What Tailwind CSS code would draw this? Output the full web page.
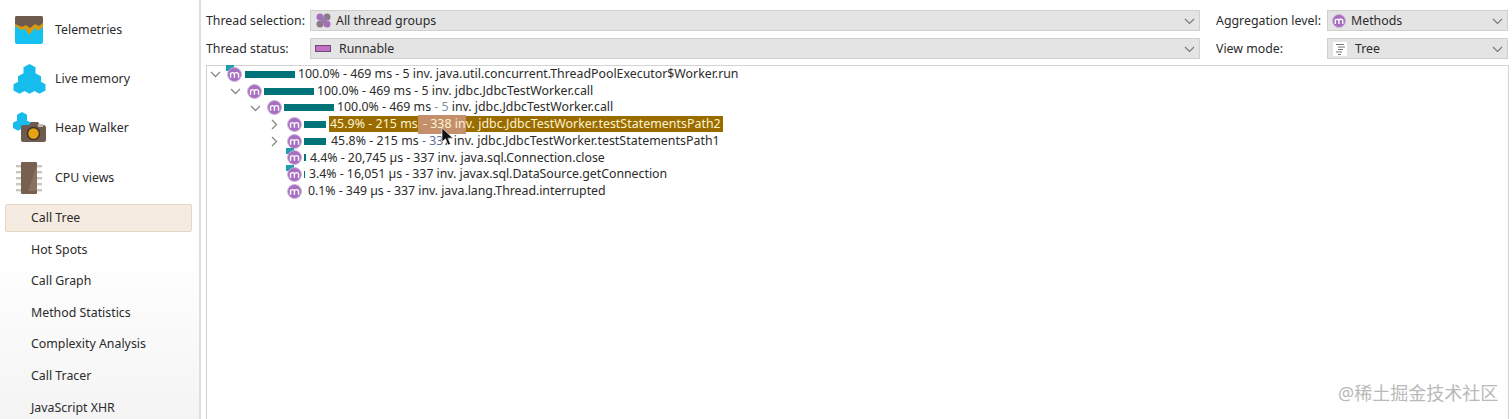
<!DOCTYPE html>
<html lang="en">
<head>
  <meta charset="UTF-8" />
  <title>Call Tree</title>
  <script src="https://cdn.jsdelivr.net/npm/@tailwindcss/browser@4"></script>
</head>
<body class="relative flex h-[419px] w-[1512px] overflow-hidden bg-white font-['Noto_Sans','Noto_Sans_CJK_SC',sans-serif] text-[12.35px] text-[#2b2b2b]">

  <svg class="hidden">
    <symbol id="method" viewBox="0 0 16 16">
      <circle cx="8" cy="8" r="7.4" fill="#a86fc0" stroke="#cdb0dc" stroke-width="1"/>
      <path d="M3.800 11.500V6M3.800 7.200c.6-1.400 3.400-1.700 4.100 0V11.500M7.900 7.200c.7-1.700 3.900-1.600 4.400.2v4.100" fill="none" stroke="#fff" stroke-width="1.500"/>
    </symbol>
  </svg>

  <!-- Sidebar -->
  <aside class="flex h-full w-[201px] shrink-0 flex-col border-r-2 border-[#dedede] bg-gradient-to-b from-white from-60% to-[#f4f4f4] px-[5px]">
    <div class="flex h-[49px] shrink-0 items-center pl-[9px] pt-[11px]">
      <div class="w-[41px] shrink-0">
        <svg class="h-[30px] w-[30px]" viewBox="0 0 30 30">
          <rect x="1" y="1" width="28" height="28" rx="2" fill="#14c1f0"/>
          <path d="M1 3a2 2 0 0 1 2-2h24a2 2 0 0 1 2 2v9l-5 4-3-3-6 7-4-6-4 1-6-4z" fill="#d49a14"/>
          <path d="M1 3a2 2 0 0 1 2-2h24a2 2 0 0 1 2 2v5l-4 3-4-2-5 4-4-3-4 2-7-3z" fill="#6f5a4e"/>
        </svg>
      </div>
      <span>Telemetries</span>
    </div>
    <div class="flex h-[49px] shrink-0 items-center pl-[8px] pt-[11px]">
      <div class="w-[42px] shrink-0">
        <svg class="h-[32px] w-[33px]" viewBox="0 0 33 32" fill="#16bdec">
          <path d="M16.500 1l6 3.200v6.400l-6 3.200-6-3.200V4.200z"/>
          <path d="M11 10l6 3.200v6.400l-6 3.200-6-3.200v-6.400z"/>
          <path d="M22 10l6 3.200v6.400l-6 3.200-6-3.200v-6.400z"/>
          <path d="M6.500 18l6 3.200v6.400l-6 3.200-6-3.200v-6.400z"/>
          <path d="M16.500 18l6 3.200v6.400l-6 3.200-6-3.200v-6.400z"/>
          <path d="M26.500 18l6 3.200v6.400l-6 3.200-6-3.200v-6.400z"/>
        </svg>
      </div>
      <span>Live memory</span>
    </div>
    <div class="flex h-[49px] shrink-0 items-center pl-[8px] pt-[11px]">
      <div class="w-[42px] shrink-0">
        <svg class="h-[32px] w-[33px]" viewBox="0 0 33 32">
          <g fill="#16bdec">
            <path d="M9 0l5 2.700v5.400l-5 2.700-5-2.700V2.700z"/>
            <path d="M5 8l5 2.700v5.400l-5 2.700-5-2.700v-5.400z"/>
            <path d="M13 8l5 2.700v5.400l-5 2.700-5-2.700v-5.400z"/>
          </g>
          <path d="M8 15a2 2 0 0 1 2-2h6l2-3h7l2 3h3a3 3 0 0 1 3 3v12a2 2 0 0 1-2 2H10a2 2 0 0 1-2-2z" fill="#6f5a4e"/>
          <rect x="25" y="12" width="5" height="3" fill="#c9b9ae"/>
          <circle cx="20.500" cy="21.500" r="6.800" fill="#3f342d"/>
          <circle cx="20.500" cy="21.500" r="5.200" fill="#e5a411"/>
        </svg>
      </div>
      <span>Heap Walker</span>
    </div>
    <div class="flex h-[50px] shrink-0 items-center pl-[11px] pt-[12px]">
      <div class="w-[39px] shrink-0">
        <svg class="h-[32px] w-[27px]" viewBox="0 0 27 32">
          <g fill="#c9c5bf">
            <rect x="0" y="3" width="5" height="2.400"/><rect x="0" y="9" width="5" height="2.400"/><rect x="0" y="15" width="5" height="2.400"/><rect x="0" y="21" width="5" height="2.400"/><rect x="0" y="27" width="5" height="2.400"/>
            <rect x="21" y="3" width="5" height="2.400"/><rect x="21" y="9" width="5" height="2.400"/><rect x="21" y="15" width="5" height="2.400"/><rect x="21" y="21" width="5" height="2.400"/><rect x="21" y="27" width="5" height="2.400"/>
          </g>
          <rect x="5" y="0" width="16" height="32" rx="1" fill="#77604f"/>
          <path d="M21 3v26H12z" fill="#8a7261"/>
        </svg>
      </div>
      <span>CPU views</span>
    </div>

    <div class="mt-[7px] flex h-[28px] w-[187px] shrink-0 items-center rounded-[2px] border border-[#e6d6c4] bg-[#f6ebe0] pl-[25px]">Call Tree</div>
    <div class="flex h-[31.600px] shrink-0 items-center pl-[26px] pt-[4px]">Hot Spots</div>
    <div class="flex h-[31.600px] shrink-0 items-center pl-[26px] pt-[4px]">Call Graph</div>
    <div class="flex h-[31.600px] shrink-0 items-center pl-[26px] pt-[4px]">Method Statistics</div>
    <div class="flex h-[31.600px] shrink-0 items-center pl-[26px] pt-[4px]">Complexity Analysis</div>
    <div class="flex h-[31.600px] shrink-0 items-center pl-[26px] pt-[4px]">Call Tracer</div>
    <div class="flex h-[31.600px] shrink-0 items-center pl-[26px] pt-[4px]">JavaScript XHR</div>
  </aside>

  <!-- Main -->
  <main class="flex min-w-0 flex-1 flex-col pl-[5px] pr-[3px]">
    <div class="flex h-[65px] shrink-0 flex-col gap-[7px] pt-[10px]">
      <div class="flex h-[21px] items-center whitespace-nowrap">
        <span class="w-[104px] shrink-0 pt-[1px]">Thread selection:</span>
        <div class="flex h-[21px] w-[890px] items-center border border-[#cfcfcf] bg-[#e4e4e4] pl-[5px] pr-[4px]">
          <svg class="mr-[5px] h-[15px] w-[15px] shrink-0" viewBox="0 0 15 15">
            <circle cx="4" cy="4" r="3.500" fill="#a56fc0"/><circle cx="11" cy="4" r="3.500" fill="#8a7a8c"/>
            <circle cx="4" cy="11" r="3.500" fill="#8a7a8c"/><circle cx="11" cy="11" r="3.500" fill="#a56fc0"/>
            <circle cx="7.500" cy="7.500" r="3" fill="#9a78aa"/>
          </svg>
          <span class="pt-[1px]">All thread groups</span>
          <svg class="ml-auto h-[8px] w-[11px]" viewBox="0 0 11 8"><path d="M1 2l4.500 4.500L10 2" fill="none" stroke="#777" stroke-width="1.100"/></svg>
        </div>
        <span class="ml-[16px] w-[111px] shrink-0 pt-[1px]">Aggregation level:</span>
        <div class="flex h-[21px] w-[181px] items-center border border-[#cfcfcf] bg-[#e4e4e4] pl-[4px] pr-[4px]">
          <svg class="mr-[5px] h-[14px] w-[14px] shrink-0"><use href="#method"/></svg>
          <span class="pt-[1px]">Methods</span>
          <svg class="ml-auto h-[8px] w-[11px]" viewBox="0 0 11 8"><path d="M1 2l4.500 4.500L10 2" fill="none" stroke="#777" stroke-width="1.100"/></svg>
        </div>
      </div>
      <div class="flex h-[21px] items-center whitespace-nowrap">
        <span class="w-[104px] shrink-0 pt-[1px]">Thread status:</span>
        <div class="flex h-[21px] w-[890px] items-center border border-[#cfcfcf] bg-[#e4e4e4] pl-[4px] pr-[4px]">
          <div class="mr-[8px] h-[7px] w-[16px] shrink-0 border border-[#6b4a75] bg-[#c36fc6]"></div>
          <span class="pt-[1px]">Runnable</span>
          <svg class="ml-auto h-[8px] w-[11px]" viewBox="0 0 11 8"><path d="M1 2l4.500 4.500L10 2" fill="none" stroke="#777" stroke-width="1.100"/></svg>
        </div>
        <span class="ml-[16px] w-[111px] shrink-0 pt-[1px]">View mode:</span>
        <div class="flex h-[21px] w-[181px] items-center border border-[#cfcfcf] bg-[#e4e4e4] pl-[5px] pr-[4px]">
          <svg class="mr-[8px] h-[14px] w-[14px] shrink-0 bg-white" viewBox="0 0 14 14"><path d="M3 2.500h8M5 5h7M5 7.500h5M3 10h6M5 12.500h3" stroke="#777" stroke-width="1" fill="none"/></svg>
          <span class="pt-[1px]">Tree</span>
          <svg class="ml-auto h-[8px] w-[11px]" viewBox="0 0 11 8"><path d="M1 2l4.500 4.500L10 2" fill="none" stroke="#777" stroke-width="1.100"/></svg>
        </div>
      </div>
    </div>

    <!-- Call tree -->
    <div class="min-h-0 flex-1 border border-b-0 border-[#d4d4d4]">
      <div class="flex flex-col whitespace-nowrap">
        <div class="flex h-[16.700px] items-center pl-[3px]">
          <svg class="mr-[6px] h-[8px] w-[11px]" viewBox="0 0 11 8"><path d="M1 2l4.500 4.500L10 2" fill="none" stroke="#888" stroke-width="1.300"/></svg>
          <div class="relative mr-[3px] h-[15px] w-[15px]"><div class="absolute -left-[1px] -top-[2px] h-[6px] w-[8px] bg-[#1e9fb0]"></div><svg class="absolute inset-0 h-[15px] w-[15px]"><use href="#method"/></svg></div>
          <div class="mr-[3px] h-[7px] w-[50px] bg-[#007478]"></div>
          <span>100.0% - 469 ms - 5 inv. java.util.concurrent.ThreadPoolExecutor$Worker.run</span>
        </div>
        <div class="flex h-[16.700px] items-center pl-[23px]">
          <svg class="mr-[6px] h-[8px] w-[11px]" viewBox="0 0 11 8"><path d="M1 2l4.500 4.500L10 2" fill="none" stroke="#888" stroke-width="1.300"/></svg>
          <svg class="mr-[2px] h-[15px] w-[15px]"><use href="#method"/></svg>
          <div class="mr-[3px] h-[7px] w-[50px] bg-[#007478]"></div>
          <span>100.0% - 469 ms - 5 inv. jdbc.JdbcTestWorker.call</span>
        </div>
        <div class="flex h-[16.700px] items-center pl-[43px]">
          <svg class="mr-[6px] h-[8px] w-[11px]" viewBox="0 0 11 8"><path d="M1 2l4.500 4.500L10 2" fill="none" stroke="#888" stroke-width="1.300"/></svg>
          <svg class="mr-[2px] h-[15px] w-[15px]"><use href="#method"/></svg>
          <div class="mr-[3px] h-[7px] w-[50px] bg-[#007478]"></div>
          <span>100.0% - 469 ms <span class="text-[#7f8fa3]">- 5</span> inv. jdbc.JdbcTestWorker.call</span>
        </div>
        <div class="flex h-[16.700px] items-center pl-[63px]">
          <svg class="mr-[9px] h-[11px] w-[8px]" viewBox="0 0 8 11"><path d="M2 1l4.500 4.500L2 10" fill="none" stroke="#888" stroke-width="1.300"/></svg>
          <svg class="mr-[2px] h-[15px] w-[15px] shrink-0"><use href="#method"/></svg>
          <div class="mr-[3px] h-[7px] w-[22px] bg-[#007478]"></div>
          <span class="flex h-[16px] w-[394px] items-center bg-[#9a6c00] pl-[1px] tracking-[0.05px] whitespace-pre text-[#fff3d0]"><span>45.9% - 215 ms</span><span class="bg-[#c4906c] pl-[2px]"> - 338 in</span><span>v. jdbc.JdbcTestWorker.testStatementsPath2</span></span>
        </div>
        <div class="flex h-[16.700px] items-center pl-[63px]">
          <svg class="mr-[9px] h-[11px] w-[8px]" viewBox="0 0 8 11"><path d="M2 1l4.500 4.500L2 10" fill="none" stroke="#888" stroke-width="1.300"/></svg>
          <svg class="mr-[2px] h-[15px] w-[15px] shrink-0"><use href="#method"/></svg>
          <div class="mr-[5px] h-[7px] w-[22px] bg-[#007478]"></div>
          <span class="tracking-[0.05px]">45.8% - 215 ms <span class="text-[#5f6f99]">- 33</span>7 inv. jdbc.JdbcTestWorker.testStatementsPath1</span>
        </div>
        <div class="flex h-[16.700px] items-center pl-[80px]">
          <div class="relative mr-[2px] h-[15px] w-[15px]"><div class="absolute -left-[1px] -top-[2px] h-[6px] w-[8px] bg-[#1e9fb0]"></div><svg class="absolute inset-0 h-[15px] w-[15px]"><use href="#method"/></svg></div>
          <div class="mr-[4px] h-[7px] w-[2px] bg-[#007478]"></div>
          <span class="tracking-[-0.03px]">4.4% - 20,745 µs - 337 inv. java.sql.Connection.close</span>
        </div>
        <div class="flex h-[16.700px] items-center pl-[80px]">
          <div class="relative mr-[2px] h-[15px] w-[15px]"><div class="absolute -left-[1px] -top-[2px] h-[6px] w-[8px] bg-[#1e9fb0]"></div><svg class="absolute inset-0 h-[15px] w-[15px]"><use href="#method"/></svg></div>
          <div class="mr-[4px] h-[7px] w-[1px] bg-[#007478]"></div>
          <span class="tracking-[-0.03px]">3.4% - 16,051 µs - 337 inv. javax.sql.DataSource.getConnection</span>
        </div>
        <div class="flex h-[16.700px] items-center pl-[80px]">
          <svg class="mr-[6px] h-[15px] w-[15px] shrink-0"><use href="#method"/></svg>
          <span class="tracking-[-0.03px]">0.1% - 349 µs - 337 inv. java.lang.Thread.interrupted</span>
        </div>
      </div>
    </div>
  </main>

  <!-- Mouse pointer -->
  <svg class="absolute left-[441px] top-[127px] h-[19px] w-[13px]" viewBox="0 0 13 19"><path d="M1 1v14l3.500-3.200L7 18l2.500-1-2.600-5.800H12z" fill="#111" stroke="#fff" stroke-width="0.600"/></svg>

  <!-- Watermark -->
  <span class="absolute left-[1338px] top-[382px] text-[18px] leading-[22px] text-[#b9b9b9]">@稀土掘金技术社区</span>
</body>
</html>
